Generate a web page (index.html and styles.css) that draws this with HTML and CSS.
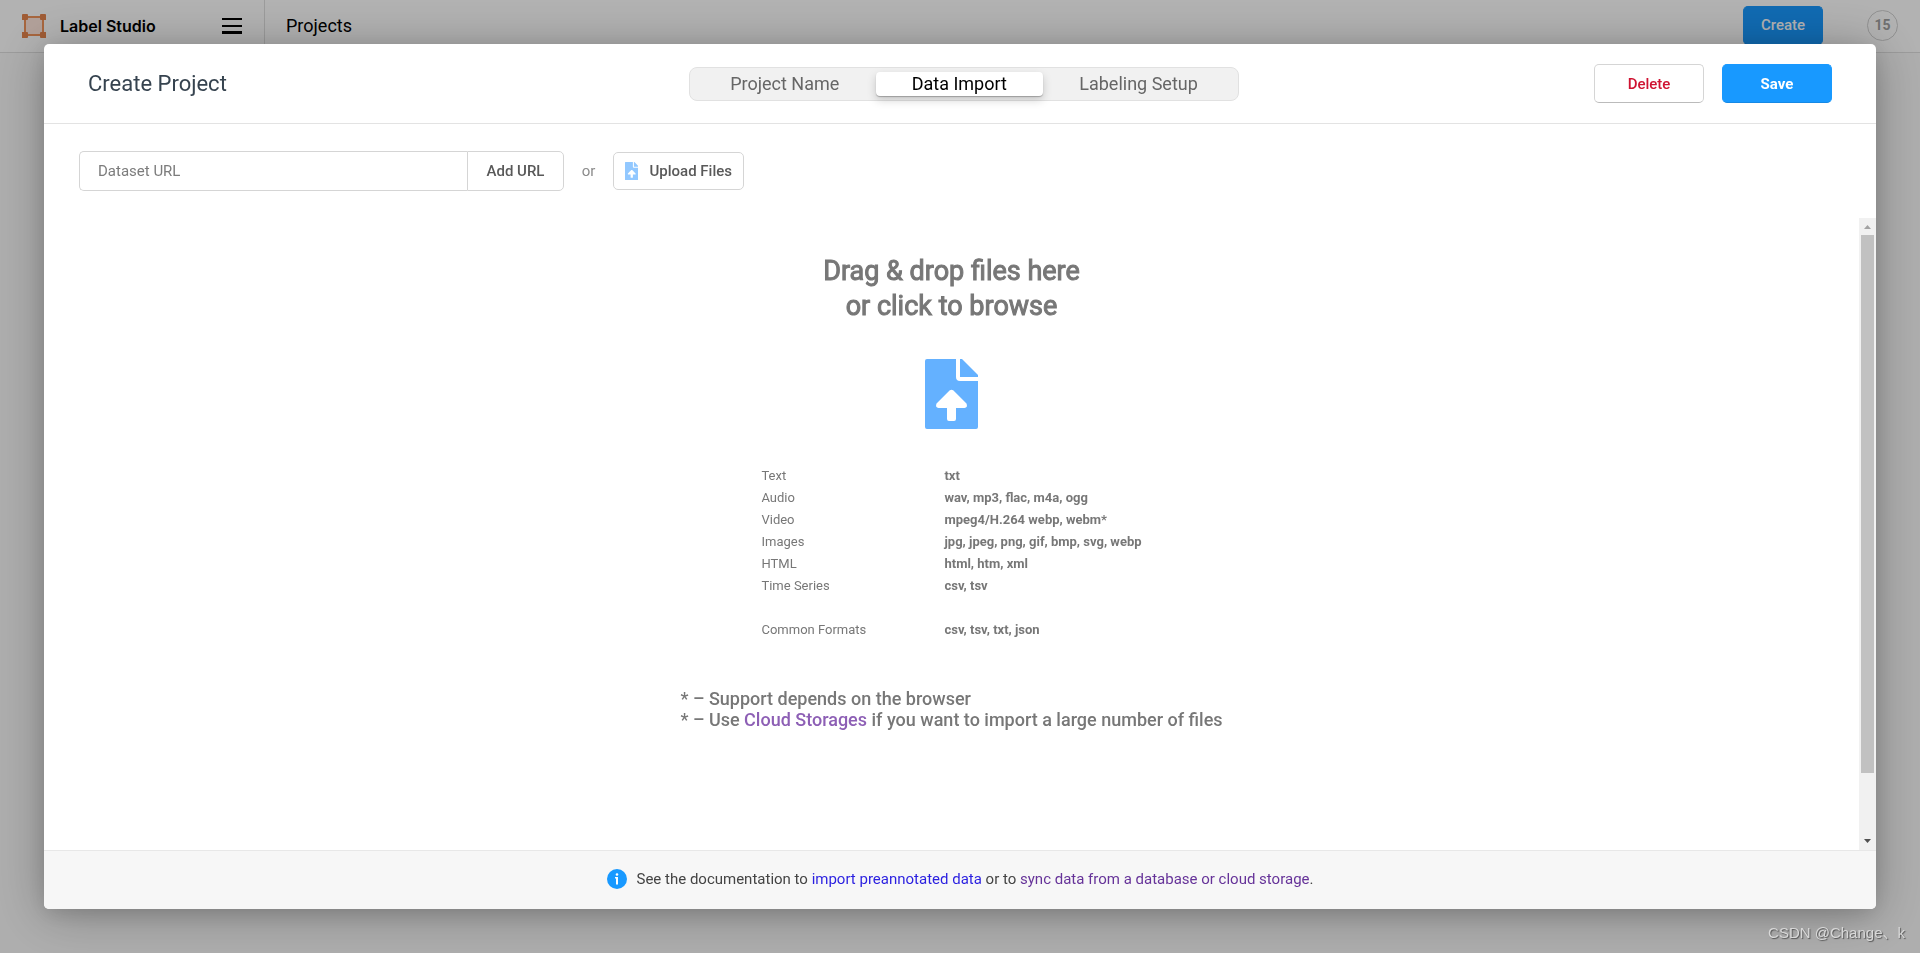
FILE: index.html
```html
<!DOCTYPE html>
<html lang="en">
<head>
<meta charset="utf-8">
<title>Label Studio</title>
<link rel="stylesheet" href="styles.css">
</head>
<body>
<header class="topbar">
  <div class="topbar-brand">
    <svg class="logo" viewBox="0 0 24 24" aria-hidden="true">
      <rect x="3" y="3" width="18" height="18" fill="#ffe6dc" stroke="#f0935a" stroke-width="2"/>
      <path fill="#e5854d" d="M1 0h4a1 1 0 0 1 1 1v4a1 1 0 0 1-1 1H0V1a1 1 0 0 1 1-1zM19 0h4a1 1 0 0 1 1 1v5h-5a1 1 0 0 1-1-1V1a1 1 0 0 1 1-1zM0 18h5a1 1 0 0 1 1 1v4a1 1 0 0 1-1 1H0zM19 18h5v6h-5a1 1 0 0 1-1-1v-4a1 1 0 0 1 1-1z"/>
    </svg>
    <span class="brand-name">Label Studio</span>
    <button class="menu-button" type="button" aria-label="Menu"><span></span><span></span><span></span></button>
  </div>
  <nav class="crumbs"><a href="#">Projects</a></nav>
  <div class="topbar-actions">
    <button class="button button-primary button-create" type="button">Create</button>
    <span class="avatar">15</span>
  </div>
</header>

<div class="overlay">
  <section class="modal" role="dialog" aria-labelledby="modal-title">
    <header class="modal-header">
      <h1 class="modal-title" id="modal-title">Create Project</h1>
      <div class="tabs" role="tablist">
        <button class="tab" type="button" role="tab">Project Name</button>
        <button class="tab tab-active" type="button" role="tab" aria-selected="true">Data Import</button>
        <button class="tab" type="button" role="tab">Labeling Setup</button>
      </div>
      <div class="modal-actions">
        <button class="button button-danger" type="button">Delete</button>
        <button class="button button-primary button-save" type="button">Save</button>
      </div>
    </header>

    <div class="import-bar">
      <form class="url-form">
        <input class="url-input" type="text" placeholder="Dataset URL" aria-label="Dataset URL">
        <button class="url-button" type="button">Add URL</button>
      </form>
      <span class="or">or</span>
      <button class="upload-button" type="button">
        <svg class="upload-icon" viewBox="0 0 53 70" aria-hidden="true">
          <path fill="#64b1ff" fill-rule="evenodd" d="M2 0H31V18Q31 22 35 22H53V68Q53 70 51 70H2Q0 70 0 68V2Q0 0 2 0ZM35 0H37L53 16V18H35ZM24.500 31.500Q26.500 30 28.500 31.500L41.500 44.500Q43 48.500 39.500 49H31V60Q31 62 29 62H24Q22 62 22 60V49H13.500Q10 48.500 11.500 44.500Z"/>
        </svg>
        Upload Files
      </button>
    </div>

    <div class="content">
      <div class="dropzone">
        <h2 class="drop-title">Drag &amp; drop files here<br>or click to browse</h2>
        <svg class="drop-icon" viewBox="0 0 53 70" aria-hidden="true">
          <path fill="#64b1ff" fill-rule="evenodd" d="M2 0H31V18Q31 22 35 22H53V68Q53 70 51 70H2Q0 70 0 68V2Q0 0 2 0ZM35 0H37L53 16V18H35ZM24.500 31.500Q26.500 30 28.500 31.500L41.500 44.500Q43 48.500 39.500 49H31V60Q31 62 29 62H24Q22 62 22 60V49H13.500Q10 48.500 11.500 44.500Z"/>
        </svg>
        <dl class="formats">
          <dt>Text</dt><dd>txt</dd>
          <dt>Audio</dt><dd>wav, mp3, flac, m4a, ogg</dd>
          <dt>Video</dt><dd>mpeg4/H.264 webp, webm*</dd>
          <dt>Images</dt><dd>jpg, jpeg, png, gif, bmp, svg, webp</dd>
          <dt>HTML</dt><dd>html, htm, xml</dd>
          <dt>Time Series</dt><dd>csv, tsv</dd>
          <dt class="common">Common Formats</dt><dd class="common">csv, tsv, txt, json</dd>
        </dl>
        <p class="notes">* – Support depends on the browser<br>* – Use <a href="#">Cloud Storages</a> if you want to import a large number of files</p>
      </div>
      <div class="scrollbar" aria-hidden="true">
        <svg class="arrow" viewBox="0 0 17 17"><path fill="#a3a3a3" d="M5 11L8.500 7L12 11Z"/></svg>
        <div class="track"><div class="thumb"></div></div>
        <svg class="arrow" viewBox="0 0 17 17"><path fill="#505050" d="M5 6L8.500 10L12 6Z"/></svg>
      </div>
    </div>

    <footer class="modal-footer">
      <svg class="info" viewBox="0 0 20 20" aria-hidden="true">
        <circle cx="10" cy="10" r="10" fill="#1899ff"/>
        <circle cx="10" cy="5.500" r="1.300" fill="#fff"/>
        <path fill="#fff" d="M8 8h3v7.500H9V9.500H8z"/>
      </svg>
      <span>See the documentation to <a class="link-new" href="#">import preannotated data</a> or to <a class="link-seen" href="#">sync data from a database or cloud storage</a>.</span>
    </footer>
  </section>
</div>
<div class="watermark">CSDN @Change、k</div>
</body>
</html>
```
FILE: styles.css
```css
* { box-sizing: border-box; }

body {
  margin: 0;
  min-height: 100vh;
  background: #fafafa;
  color: #000;
  font-family: Roboto, "Liberation Sans", sans-serif;
  font-size: 15px;
}

button, input { font: inherit; }
a { text-decoration: none; }

/* Top bar */
.topbar {
  display: flex;
  align-items: center;
  height: 53px;
  background: #fff;
  border-bottom: 1px solid #dfdfdf;
}
.topbar-brand {
  display: flex;
  align-items: center;
  gap: 14px;
  width: 265px;
  height: 100%;
  padding: 0 22px;
  border-right: 1px solid #dfdfdf;
}
.logo { width: 24px; height: 24px; }
.brand-name { font-family: Inter, Roboto, sans-serif; font-size: 16px; font-weight: 600; }
.menu-button {
  display: flex;
  flex-direction: column;
  justify-content: space-between;
  width: 20px;
  height: 16px;
  margin-left: auto;
  padding: 0;
  border: 0;
  background: none;
}
.menu-button span { height: 2px; background: #000; }
.menu-button span:last-child { height: 3px; }
.crumbs { padding: 0 0 2px 21px; font-size: 18px; }
.crumbs a { color: #000; }
.topbar-actions {
  display: flex;
  align-items: center;
  gap: 44px;
  margin-left: auto;
  padding: 0 22px 2px 0;
}
.avatar {
  display: grid;
  place-items: center;
  width: 31px;
  height: 31px;
  border: 1px solid #d0d0d0;
  border-radius: 50%;
  color: #a0a0a0;
  font-size: 14px;
  font-weight: 700;
}

/* Buttons */
.button {
  width: 110px;
  height: 39px;
  padding: 0;
  border: 1px solid #d5d5d5;
  border-bottom-color: #bbb;
  border-radius: 5px;
  background: #fff;
  font-weight: 500;
}
.button-danger { color: #cf1332; }
.button-primary {
  border-color: #1899ff;
  border-bottom-color: #1689e5;
  background: #1899ff;
  color: #fff;
}
.button-create { width: 80px; }
.button-save { font-weight: 700; }

/* Modal */
.overlay {
  position: fixed;
  inset: 0;
  display: grid;
  padding: 44px;
  background: rgba(0, 0, 0, 0.3);
}
.modal {
  display: flex;
  flex-direction: column;
  min-height: 0;
  overflow: hidden;
  border-radius: 5px;
  background: #fff;
  box-shadow: 0 5px 50px rgba(0, 0, 0, 0.3), 0 5px 20px rgba(0, 0, 0, 0.1);
}
.modal-header {
  display: grid;
  grid-template-columns: 601fr 550px 593fr;
  align-items: center;
  height: 80px;
  padding: 0 44px;
  border-bottom: 1px solid #e3e3e3;
}
.modal-title { margin: 0; color: #36434f; font-size: 22px; font-weight: 400; }
.tabs {
  display: flex;
  height: 34px;
  padding: 4px;
  border: 1px solid #e1e1e1;
  border-radius: 8px;
  background: #f1f1f1;
}
.tab {
  flex: 1 1 auto;
  padding: 0;
  border: 0;
  border-radius: 4px;
  background: none;
  color: #666;
  font-size: 18px;
}
.tab-active {
  background: #fff;
  color: #000;
  box-shadow: 0 1px 1px rgba(0, 0, 0, 0.25), 0 4px 10px rgba(0, 0, 0, 0.18);
}
.modal-actions { display: flex; justify-content: flex-end; gap: 18px; }

/* Import controls */
.import-bar {
  display: flex;
  align-items: center;
  height: 94px;
  padding: 0 35px;
}
.url-form { display: flex; width: 485px; height: 40px; }
.url-input {
  flex: 1;
  min-width: 0;
  padding: 0 18px;
  border: 1px solid #d5d5d5;
  border-right: 0;
  border-radius: 5px 0 0 5px;
  outline: 0;
}
.url-input::placeholder { color: #7c7c7c; }
.url-button {
  width: 97px;
  padding: 0;
  border: 1px solid #d5d5d5;
  border-radius: 0 5px 5px 0;
  background: #fff;
  color: #595959;
  font-weight: 500;
}
.or { width: 49px; color: #8c8c8c; text-align: center; }
.upload-button {
  display: flex;
  align-items: center;
  gap: 11px;
  width: 131px;
  height: 38px;
  padding: 0 11px;
  border: 1px solid #d5d5d5;
  border-radius: 5px;
  background: #fff;
  color: #595959;
  font-weight: 500;
  white-space: nowrap;
}
.upload-icon { width: 14px; height: 18px; opacity: 0.7; }

/* Drop area */
.content { display: flex; flex: 1; min-height: 0; }
.dropzone {
  display: flex;
  flex: 1;
  flex-direction: column;
  align-items: center;
  overflow: hidden;
  padding-top: 36px;
  color: #777;
}
.drop-title {
  margin: 0 0 35px;
  font-size: 27px;
  font-weight: 400;
  line-height: 35px;
  text-align: center;
  -webkit-text-stroke: 1px currentColor;
}
.drop-icon { flex: none; width: 53px; height: 70px; }
.formats {
  display: grid;
  grid-template-columns: 183px auto;
  margin: 36px 0 47px;
  font-size: 13px;
  line-height: 22px;
}
.formats dd { margin: 0; font-weight: 700; }
.formats .common { margin-top: 22px; }
.notes {
  margin: 0;
  font-size: 18px;
  font-weight: 500;
  line-height: 21px;
}
.notes a { color: #8d5fb5; }

.scrollbar {
  display: flex;
  flex-direction: column;
  width: 17px;
  background: #f1f1f1;
}
.arrow { width: 17px; height: 17px; }
.track { flex: 1; padding: 0 2px; }
.thumb { height: 90%; background: #c1c1c1; }

/* Footer */
.modal-footer {
  display: flex;
  align-items: center;
  justify-content: center;
  gap: 10px;
  height: 59px;
  padding-bottom: 2px;
  border-top: 1px solid #e8e8e8;
  background: #f7f7f7;
  color: #444;
}
.info { width: 20px; height: 20px; }
.link-new { color: #2a1fe0; }
.link-seen { color: #663399; }

.watermark {
  position: fixed;
  right: 15px;
  bottom: 8px;
  color: #d8d8d8;
  font-family: "Liberation Sans", "Noto Sans CJK SC", sans-serif;
  line-height: 24px;
  text-shadow: 1px 1px 1px #555;
}
```
